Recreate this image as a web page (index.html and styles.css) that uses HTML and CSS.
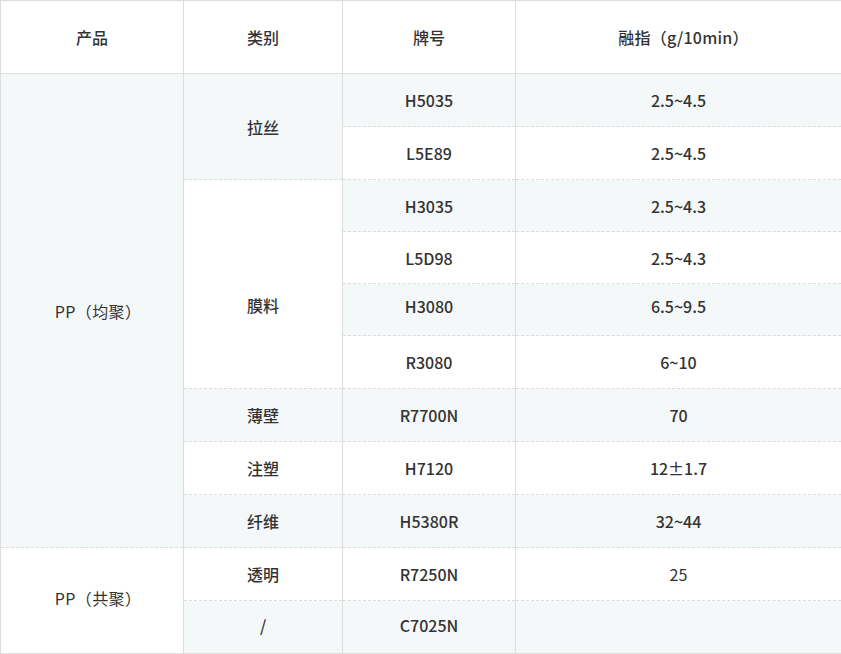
FILE: index.html
```html
<!DOCTYPE html>
<html lang="zh-CN">
<head>
<meta charset="utf-8">
<title>PP 牌号</title>
<link rel="stylesheet" href="styles.css">
</head>
<body>
<table class="spec">
  <colgroup>
    <col class="c1"><col class="c2"><col class="c3"><col class="c4">
  </colgroup>
  <thead>
    <tr class="head">
      <th>产品</th><th>类别</th><th>牌号</th><th class="paren-head">融指（g/10min）</th>
    </tr>
  </thead>
  <tbody>
    <tr class="h53">
      <td rowspan="9" class="g light prod">PP（均聚）</td>
      <td rowspan="2" class="g">拉丝</td>
      <td class="g">H5035</td><td class="g">2.5~4.5</td>
    </tr>
    <tr class="h53"><td>L5E89</td><td>2.5~4.5</td></tr>
    <tr class="h52">
      <td rowspan="4" class="film">膜料</td>
      <td class="g">H3035</td><td class="g">2.5~4.3</td>
    </tr>
    <tr class="h52"><td>L5D98</td><td>2.5~4.3</td></tr>
    <tr class="h52"><td class="g up">H3080</td><td class="g up">6.5~9.5</td></tr>
    <tr class="h53"><td>R3080</td><td>6~10</td></tr>
    <tr class="h53"><td class="g">薄壁</td><td class="g">R7700N</td><td class="g">70</td></tr>
    <tr class="h53"><td>注塑</td><td>H7120</td><td>12±1.7</td></tr>
    <tr class="h53"><td class="g">纤维</td><td class="g">H5380R</td><td class="g">32~44</td></tr>
    <tr class="h53">
      <td rowspan="2" class="light prod co">PP（共聚）</td>
      <td>透明</td><td>R7250N</td><td class="light">25</td>
    </tr>
    <tr class="h53 last"><td class="g">/</td><td class="g">C7025N</td><td class="g"></td></tr>
  </tbody>
</table>
</body>
</html>
```

FILE: styles.css
```css
html, body {
  margin: 0;
  padding: 0;
  background: #fff;
}

.spec {
  border-collapse: collapse;
  width: 841px;
  table-layout: fixed;
  font-family: "Noto Sans CJK SC", "Noto Sans", sans-serif;
  font-size: 16px;
  color: #333;
  border: 1px solid #dddddd;
}

.c1 { width: 183px; }
.c2 { width: 159px; }
.c3 { width: 173px; }
.c4 { width: 326px; }

.spec th,
.spec td {
  text-align: center;
  vertical-align: middle;
  padding: 0;
  font-weight: 500;
  border-left: 1px solid #dddddd;
  border-right: 1px solid #dddddd;
  border-top: 1px dashed #dddddd;
  border-bottom: 1px dashed #dddddd;
  background: #fff;
}

.spec th {
  border-bottom: 1px solid #dddddd;
  border-top: 1px solid #dddddd;
}

.head { height: 73px; }
.h53 { height: 53px; }
.h52 { height: 52px; }

.spec tbody tr:last-child td { border-bottom: 1px solid #dddddd; }
.spec tr.last td { padding-bottom: 5px; }

.spec td.g { background: #f5f8f9; }
.spec td.light { font-weight: 400; }

.spec th.paren-head { padding-left: 10px; letter-spacing: 0.2px; }
.spec td.prod { padding-left: 12px; letter-spacing: 0.4px; }
.spec td.co { padding-bottom: 6px; }
.spec td.film { padding-top: 42px; }
.spec td.up { padding-bottom: 8px; }
```
